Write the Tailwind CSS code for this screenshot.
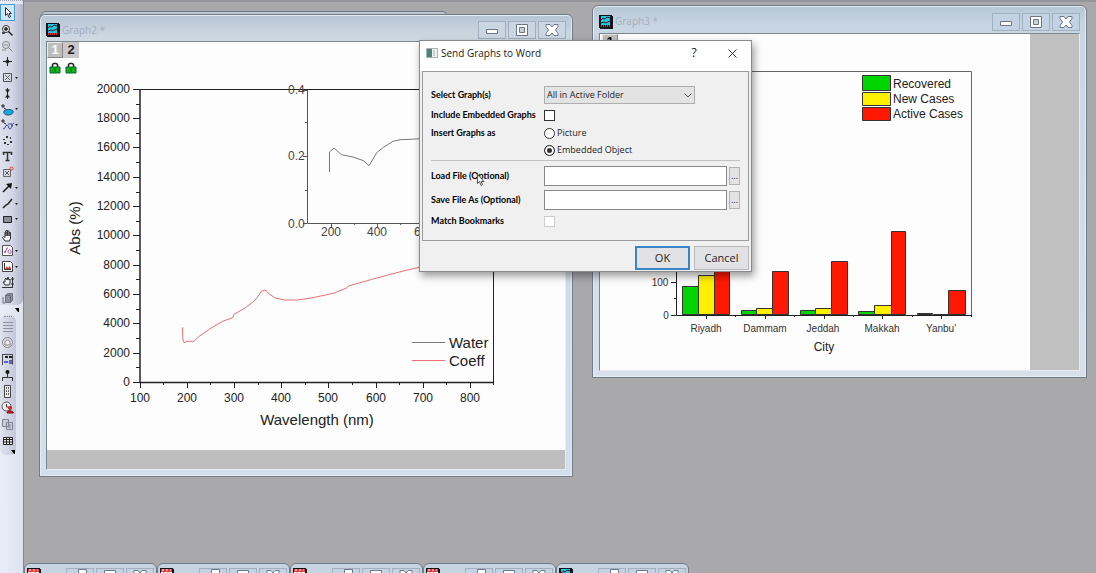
<!DOCTYPE html>
<html lang="en">
<head>
    <meta charset="UTF-8">
    <meta name="viewport" content="width=device-width, initial-scale=1.0">
    <title>Send Graphs to Word</title>
    <script src="https://cdn.jsdelivr.net/npm/@tailwindcss/browser@4"></script>
</head>
<body class="flex h-screen overflow-hidden bg-[#a9a8ab] font-['Open_Sans','Noto_Sans',sans-serif] text-black">

    <!-- Shared symbols -->
    <svg class="hidden">
        <symbol id="graph-icon" viewBox="0 0 14 14">
            <path d="M0 0h13v1h1v13H1v-1H0z" fill="#10131a"/>
            <path d="M2 1h9v9H2z" fill="#20c8e0"/>
            <path d="M2 5l2-2 2 1 2-2 3 1M2 8l3-1 2 1 4-2" stroke="#123" fill="none"/>
            <path d="M3 4h2M7 7h2" stroke="#d33"/>
            <path d="M2 11h1M4 11h1M6 11h1M8 11h1M10 11h1" stroke="#e22" stroke-width="2"/>
        </symbol>
        <symbol id="book-icon" viewBox="0 0 14 14">
            <path d="M0 0h13v1h1v13H0z" fill="#10131a"/>
            <path d="M1 1h11v3H1z" fill="#e33b3b"/>
            <path d="M2 2h2M6 2h2M10 2h1" stroke="#fff"/>
            <path d="M1 4h11v9H1z" fill="#fff"/>
            <path d="M4 4v9M8 4v9M1 7h11M1 10h11" stroke="#99a"/>
        </symbol>
        <symbol id="min" viewBox="0 0 14 14">
            <path d="M1.500 6.500h11v4h-11z" fill="#fff" stroke="#6b7688"/>
        </symbol>
        <symbol id="max" viewBox="0 0 14 14">
            <path d="M1.500 1.500h11v11h-11z" fill="#fff" stroke="#6b7688"/>
            <path d="M4.500 4.500h5v5h-5z" fill="#c3d0df" stroke="#6b7688"/>
        </symbol>
        <symbol id="restore" viewBox="0 0 14 14">
            <path d="M5.500 .5h8v7h-8z" fill="#fff" stroke="#6b7688"/>
            <path d="M1.500 4.500h8v8h-8z" fill="#fff" stroke="#6b7688"/>
            <path d="M4.500 7.500h2v2h-2z" fill="#c3d0df" stroke="#6b7688"/>
        </symbol>
        <symbol id="close" viewBox="0 0 14 14">
            <path d="M1 1.500h4L7 4l2-2.500h4v2L10.500 7l2.500 3.500v2H9L7 10l-2 2.500H1v-2L3.500 7 1 3.500z" fill="#fff" stroke="#6b7688"/>
        </symbol>
        <symbol id="lock" viewBox="0 0 12 12">
            <path d="M3.500 6V2.500L5 1.500h2l1.500 1V6" fill="none" stroke="#222" stroke-width="1.500"/>
            <path d="M1 5h10v6H1z" fill="#12b312" stroke="#063"/>
            <path d="M6 6v4" stroke="#062"/>
        </symbol>
    </svg>

    <!-- Tool bar -->
    <aside class="flex w-6 shrink-0 flex-col border-r border-[#85868f] bg-gradient-to-r from-[#e9edf8] to-[#dfe4f2]">
        <div class="h-1 border-t border-dotted border-[#9a9fb5]"></div>
        <div class="flex h-[301px] flex-col justify-between rounded-br-md bg-gradient-to-r from-[#dde1ee] via-[#d3d7e6] to-[#b4b8cc]">
            <button aria-label="Pointer" class="h-[17px] w-[15px] border border-[#4a9ad4] bg-[#cfe6f8]">
                <svg class="size-[13px]" viewBox="0 0 13 13"><path d="M4.500 1.500v8l2-2 1.500 4 1.500-1-1.500-3h2.500z" fill="#fff" stroke="#333"/></svg>
            </button>
            <button aria-label="Zoom in" class="h-[13px] pl-[1px]"><svg class="size-[13px]" viewBox="0 0 13 13"><circle cx="5" cy="5" r="3.500" fill="#eee" stroke="#333"/><path d="M3 5h4M5 3v4M7.500 7.500l4 4M1 9h3" stroke="#222" stroke-width="1.500"/></svg></button>
            <button aria-label="Zoom out" class="h-[13px] pl-[1px]"><svg class="size-[13px]" viewBox="0 0 13 13"><circle cx="5" cy="5" r="3.500" fill="none" stroke="#888"/><path d="M3 5h4M7.500 7.500l4 4M1 10h4" stroke="#888"/></svg></button>
            <button aria-label="Screen reader" class="h-[13px] pl-[1px]"><svg class="size-[13px]" viewBox="0 0 13 13"><path d="M6.500 2v9M2 6.500h9" stroke="#222"/><path d="M6.500 4l2.500 2.500L6.500 9 4 6.500z" fill="#222"/></svg></button>
            <button aria-label="Data selector" class="flex h-[13px] items-center pl-[1px]"><svg class="size-[13px]" viewBox="0 0 13 13"><path d="M2.500 2.500h8v8h-8z" fill="none" stroke="#555"/><path d="M4 4l5 5M9 4L4 9" stroke="#666"/></svg><svg class="ml-px h-[2px] w-[3px]" viewBox="0 0 4 3"><path d="M0 0h4L2 3z"/></svg></button>
            <button aria-label="Data cursor" class="h-[13px] pl-[1px]"><svg class="size-[13px]" viewBox="0 0 13 13"><path d="M4 2.500h5L6.500 6zM6.500 7L9 10.500H4zM6 1h1v11H6z" fill="#222"/></svg></button>
            <button aria-label="Mask points" class="flex h-[13px] items-center pl-[1px]"><svg class="size-[13px]" viewBox="0 0 13 13"><path d="M2 1v4M0 3h4M3 5l3 2" stroke="#222"/><path d="M3 8c2-2 8-2 9 0s-2 4-5 4-5-2-4-4z" fill="#1aa9dc" stroke="#15567a"/></svg><svg class="ml-px h-[2px] w-[3px]" viewBox="0 0 4 3"><path d="M0 0h4L2 3z"/></svg></button>
            <button aria-label="Draw data" class="flex h-[13px] items-center pl-[1px]"><svg class="size-[13px]" viewBox="0 0 13 13"><path d="M2 1v4M0 3h4M3 5l2 1" stroke="#222"/><path d="M2 11c3 0 2-4 4-4s1 4 3 4 1-5 4-6M7 6h4v3" fill="none" stroke="#3b4a8c"/></svg><svg class="ml-px h-[2px] w-[3px]" viewBox="0 0 4 3"><path d="M0 0h4L2 3z"/></svg></button>
            <button aria-label="Cluster" class="h-[13px] pl-[1px]"><svg class="size-[13px]" viewBox="0 0 13 13"><path d="M5 2h2v2H5zM9 3h1v2H9zM2 5h2v1H2zM3 8h2v2H3zM9 7h2v2H9zM6 10h2v1H6z" fill="#333"/></svg></button>
            <button aria-label="Text" class="h-[13px] pl-[1px]"><svg class="size-[13px]" viewBox="0 0 13 13"><path d="M2.500 5V2.500h8V5M6.500 2.500v8M4.500 10.500h4" stroke="#333" stroke-width="1.500" fill="none"/></svg></button>
            <button aria-label="Annotation" class="h-[13px] pl-[1px]"><svg class="size-[13px]" viewBox="0 0 13 13"><path d="M2.500 3.500h7v7h-7z" fill="none" stroke="#666"/><path d="M4 5l4 4M8 5L4 9" stroke="#555"/><circle cx="10.500" cy="2.500" r="1.500" fill="none" stroke="#e33"/></svg></button>
            <button aria-label="Arrow" class="flex h-[13px] items-center pl-[1px]"><svg class="size-[13px]" viewBox="0 0 13 13"><path d="M2 11l6-6" stroke="#111" stroke-width="1.500"/><path d="M5 3l6-1-1 6z" fill="#111"/></svg><svg class="ml-px h-[2px] w-[3px]" viewBox="0 0 4 3"><path d="M0 0h4L2 3z"/></svg></button>
            <button aria-label="Line" class="flex h-[13px] items-center pl-[1px]"><svg class="size-[13px]" viewBox="0 0 13 13"><path d="M2 11l3-3 2-1 4-5" stroke="#222" stroke-width="1.500" fill="none"/></svg><svg class="ml-px h-[2px] w-[3px]" viewBox="0 0 4 3"><path d="M0 0h4L2 3z"/></svg></button>
            <button aria-label="Rectangle" class="flex h-[13px] items-center pl-[1px]"><svg class="size-[13px]" viewBox="0 0 13 13"><path d="M2.500 3.500h8v6h-8z" fill="#8d8f98" stroke="#222"/></svg><svg class="ml-px h-[2px] w-[3px]" viewBox="0 0 4 3"><path d="M0 0h4L2 3z"/></svg></button>
            <button aria-label="Pan" class="h-[13px] pl-[1px]"><svg class="size-[13px]" viewBox="0 0 13 13"><path d="M4 12L1.500 8.500l1-1L4 8.500V3h1v4V1.500h1.500V6.500V2H8v5V3.500h1.500V9L8.500 12z" fill="#fff" stroke="#333"/></svg></button>
            <button aria-label="Insert equation" class="flex h-[13px] items-center pl-[1px]"><svg class="size-[13px]" viewBox="0 0 13 13"><path d="M1.500 1.500h8l2 2v8h-10z" fill="#fff" stroke="#555"/><path d="M3 7l1 2 2-5h1M7 8c0-3 3-3 3 0s-3 1-3 0" fill="none" stroke="#a34b8f"/></svg><svg class="ml-px h-[2px] w-[3px]" viewBox="0 0 4 3"><path d="M0 0h4L2 3z"/></svg></button>
            <button aria-label="Insert graph" class="flex h-[13px] items-center pl-[1px]"><svg class="size-[13px]" viewBox="0 0 13 13"><path d="M1.500 1.500h8l2 2v8h-10z" fill="#fff" stroke="#444"/><path d="M3.500 3v6.500H10" fill="none" stroke="#333"/><path d="M4 9l2-3 1 2 2-2 1 3z" fill="#d33"/></svg><svg class="ml-px h-[2px] w-[3px]" viewBox="0 0 4 3"><path d="M0 0h4L2 3z"/></svg></button>
            <button aria-label="Rescale pan" class="h-[13px] pl-[1px]"><svg class="size-[13px]" viewBox="0 0 13 13"><path d="M4 9L2 6l2 0V3l1-1 1 2 1-3 1 3 1-1v4l-1 2z" fill="#eee" stroke="#333"/><path d="M11.500 1v11M1 11.500h11M10 3h3M10 8h3" stroke="#333"/></svg></button>
            <button aria-label="3D rotate" class="h-[13px] pl-[1px]"><svg class="size-[13px]" viewBox="0 0 13 13"><path d="M4.500 3.500l2-2h5v7l-2 2h-5z" fill="#8b93a0" stroke="#6c7480"/><path d="M4.500 3.500h5v7M2 5v6h2" fill="none" stroke="#626a76"/></svg></button>
        </div>
        <div class="flex h-[10px] items-center justify-end pr-1"><svg class="size-1" viewBox="0 0 4 4"><path d="M0 0h4v4H3z"/></svg></div>
        <div class="flex h-[140px] w-4 flex-col justify-between rounded-md bg-gradient-to-r from-[#dfe3ef] to-[#c3c7d8] py-px">
            <div class="ml-1 w-2 border-t border-dotted border-[#8c90a4]"></div>
            <button aria-label="Rows" class="h-[13px] pl-[1px]"><svg class="size-[13px]" viewBox="0 0 13 13"><path d="M2 2.500h10M2 5.500h10M2 8.500h10M2 11.500h10" stroke="#8d91a0"/></svg></button>
            <button aria-label="Refresh" class="h-[13px] pl-[1px]"><svg class="size-[13px]" viewBox="0 0 13 13"><circle cx="6.500" cy="6.500" r="5" fill="#dde" stroke="#888"/><path d="M4 9V6.500a2.500 2.500 0 015 0V9z" fill="#eee" stroke="#888"/></svg></button>
            <button aria-label="Legend" class="h-[13px] pl-[1px]"><svg class="size-[13px]" viewBox="0 0 13 13"><path d="M1.500 1.500h10v10" fill="none" stroke="#444"/><path d="M1.500 1v11" stroke="#444"/><path d="M4 4h3M8 4h3" stroke="#222" stroke-width="2"/><path d="M3 9h4M8 8h3M8 10h3" stroke="#2b3be0" stroke-width="1.500"/></svg></button>
            <button aria-label="Scale" class="h-[13px] pl-[1px]"><svg class="size-[13px]" viewBox="0 0 13 13"><circle cx="6.500" cy="3" r="2" fill="#111"/><path d="M1.500 12V8.500h10V12M6.500 5v3" fill="none" stroke="#333"/></svg></button>
            <button aria-label="Ruler" class="h-[13px] pl-[1px]"><svg class="size-[13px]" viewBox="0 0 13 13"><path d="M3.500 .5h6v12h-6z" fill="#eee" stroke="#444"/><path d="M5 3h3M5 6h3M5 9h3" stroke="#333" stroke-width="1.500" stroke-dasharray="1 1"/></svg></button>
            <button aria-label="Date stamp" class="h-[13px] pl-[1px]"><svg class="size-[13px]" viewBox="0 0 13 13"><circle cx="5.500" cy="5.500" r="4.500" fill="#eee" stroke="#555"/><path d="M5.500 3v3h2" stroke="#333" fill="none"/><circle cx="9" cy="7" r="2" fill="#d42020"/><path d="M6 12c0-3 6-3 6.500 0z" fill="#d42020" stroke="#811"/></svg></button>
            <button aria-label="Copy" class="h-[13px] pl-[1px]"><svg class="size-[13px]" viewBox="0 0 13 13"><path d="M1.500 1.500h6v7h-6zM5.500 4.500h6v7h-6z" fill="#c9ccd8" stroke="#7f8494"/><path d="M7 7h3M7 9h3" stroke="#7f8494"/></svg></button>
            <button aria-label="Table" class="h-[13px] pl-[1px]"><svg class="size-[13px]" viewBox="0 0 13 13"><path d="M2.500 3.500h9v7h-9zM2.500 5.500h9M2.500 8h9M5.500 3.500v7M8.500 3.500v7" fill="#eee" stroke="#222"/></svg></button>
            <div class="flex justify-end pr-px"><svg class="size-1" viewBox="0 0 4 4"><path d="M0 0h4v4H3z"/></svg></div>
        </div>
    </aside>

    <!-- Workspace -->
    <main class="relative flex-1 overflow-hidden border-t-2 border-[#96959c]">

        <div class="absolute top-[9px] left-4 h-6 w-[408px] rounded-t-md border border-[#717a84] bg-[#bcc6d1]"></div>

        <!-- Graph2 -->
        <section class="absolute top-3 left-[15px] flex h-[463px] w-[534px] flex-col rounded-t-md border border-[#727c88] bg-gradient-to-b from-[#b7c6d4] via-[#cdd8e2] via-5% to-[#d3dfec] px-[6px] pb-[6px] shadow-[inset_0_0_0_1px_#e3ebf3]">
            <header class="flex h-[26px] items-center">
                <svg class="mt-1 size-[14px]"><use href="#graph-icon"/></svg>
                <h2 class="mt-1 ml-[2px] flex-1 text-[10px] text-[#a3aebb]">Graph2 *</h2>
                <div class="mt-1 flex gap-[2px]">
                    <button aria-label="Minimize" class="grid h-[18px] w-7 place-items-center border border-[#a1afbf] bg-[#cad6e2]"><svg class="size-[14px]"><use href="#min"/></svg></button>
                    <button aria-label="Maximize" class="grid h-[18px] w-7 place-items-center border border-[#a1afbf] bg-[#cad6e2]"><svg class="size-[14px]"><use href="#max"/></svg></button>
                    <button aria-label="Close" class="grid h-[18px] w-7 place-items-center border border-[#a1afbf] bg-[#cad6e2]"><svg class="size-[14px]"><use href="#close"/></svg></button>
                </div>
            </header>
            <div class="relative flex-1 border border-[#7b868e] border-r-[#e6ecf3] border-b-[#e6ecf3] bg-[#bebebe]">
                <svg class="block w-full bg-[#fdfdfe] font-['Liberation_Sans',sans-serif]" viewBox="47 42 518 408">
                    <g stroke="#222" fill="none">
                        <path d="M140 89.500H493.500V382" />
                        <path d="M140 89V382.500H494" stroke-width="1.500"/>
                        <path d="M133 89.500h7M133 118.500h7M133 147.500h7M133 177.500h7M133 206.500h7M133 235.500h7M133 265.500h7M133 294.500h7M133 323.500h7M133 353.500h7M133 382.500h7"/>
                        <path d="M136 104.500h4M136 133.500h4M136 162.500h4M136 192.500h4M136 221.500h4M136 250.500h4M136 279.500h4M136 309.500h4M136 338.500h4M136 367.500h4"/>
                        <path d="M140.500 382v6M187.500 382v6M234.500 382v6M281.500 382v6M328.500 382v6M376.500 382v6M423.500 382v6M470.500 382v6"/>
                        <path d="M163.500 382v3M210.500 382v3M258.500 382v3M305.500 382v3M352.500 382v3M399.500 382v3M446.500 382v3M493.500 382v3"/>
                    </g>
                    <g class="text-[12px]" fill="#222" text-anchor="end">
                        <text x="130" y="93">20000</text>
                        <text x="130" y="122">18000</text>
                        <text x="130" y="151">16000</text>
                        <text x="130" y="181">14000</text>
                        <text x="130" y="210">12000</text>
                        <text x="130" y="239">10000</text>
                        <text x="130" y="269">8000</text>
                        <text x="130" y="298">6000</text>
                        <text x="130" y="327">4000</text>
                        <text x="130" y="357">2000</text>
                        <text x="130" y="386">0</text>
                    </g>
                    <g class="text-[12px]" fill="#222" text-anchor="middle">
                        <text x="140" y="402">100</text>
                        <text x="187" y="402">200</text>
                        <text x="234" y="402">300</text>
                        <text x="281" y="402">400</text>
                        <text x="328" y="402">500</text>
                        <text x="376" y="402">600</text>
                        <text x="423" y="402">700</text>
                        <text x="470" y="402">800</text>
                    </g>
                    <text class="text-[15px]" x="317" y="425" text-anchor="middle" fill="#222">Wavelength (nm)</text>
                    <text class="text-[15px]" transform="translate(80 228) rotate(-90)" text-anchor="middle" fill="#222">Abs (%)</text>
                    <path d="M182.300 327.300l.7 12.700 1 2.700 3.300-1.400h6.700l4.300-4.300L210 328.700l13.300-7.700 9.400-3.300 1.300-3.400 11-6.300 10-7.700 6.700-9.300 4-1 2.600 3.300 6.700 4.700 10 2h11.700l13.300-1.700 23.300-5 13.400-5.300 1.600-2 28.400-8 26.600-7 16-3.700 15-4" fill="none" stroke="#ee7070"/>
                    <!-- Inset plot -->
                    <path d="M307.500 90V223.500H440M303 90.500h4M303 156.500h4M303 223.500h4M305 122.500h2M305 190.500h2M331.500 223v4M377.500 223v4M423.500 223v4M354.500 223v2M400.500 223v2" stroke="#555" fill="none"/>
                    <path d="M329.500 172v-20l4.500-4 7.500 6.700 11.500 2.300 10 3.500 6 5.200 7.700-13 6.800-5.400 9.500-6 7-1.600 10-.4 16-1" fill="none" stroke="#777"/>
                    <g class="text-[12px]" fill="#444">
                        <text x="288" y="94">0.4</text>
                        <text x="288" y="160">0.2</text>
                        <text x="288" y="228">0.0</text>
                        <text x="331" y="236" text-anchor="middle">200</text>
                        <text x="377" y="236" text-anchor="middle">400</text>
                        <text x="424" y="236" text-anchor="middle">600</text>
                    </g>
                    <path d="M412 342.500h33" stroke="#777"/>
                    <path d="M412 360.500h33" stroke="#ee7070"/>
                    <text class="text-[15px]" x="449" y="348" fill="#222">Water</text>
                    <text class="text-[15px]" x="449" y="366" fill="#222">Coeff</text>
                </svg>
                <!-- Layer tabs -->
                <div class="absolute top-0 left-0 grid grid-cols-2 justify-items-center font-['Liberation_Sans',sans-serif] text-[13px] leading-4 font-bold">
                    <button class="h-4 w-4 border border-t-[#e8e8e8] border-r-[#888] border-b-[#888] border-l-[#e8e8e8] bg-[#bdbdbd] leading-[14px] text-white">1</button>
                    <button class="h-4 w-4 bg-[#c9c7cb] text-[#222]">2</button>
                    <svg class="mt-1 size-3"><use href="#lock"/></svg>
                    <svg class="mt-1 size-3"><use href="#lock"/></svg>
                </div>
            </div>
        </section>

        <!-- Graph3 -->
        <section class="absolute top-[3px] left-[568px] flex h-[373px] w-[495px] flex-col rounded-t-md border border-[#727c88] bg-gradient-to-b from-[#b7c6d4] via-[#c8d6e4] via-5% to-[#d8e1ea] px-[6px] pb-[6px] shadow-[inset_0_0_0_1px_#e3ebf3]">
            <header class="flex h-[27px] items-center">
                <svg class="mt-1 size-[14px]"><use href="#graph-icon"/></svg>
                <h2 class="mt-1 ml-[2px] flex-1 text-[10px] text-[#a3aebb]">Graph3 *</h2>
                <div class="mt-1 flex gap-[2px]">
                    <button aria-label="Minimize" class="grid h-[18px] w-7 place-items-center border border-[#a1afbf] bg-[#c4d3e3]"><svg class="size-[14px]"><use href="#min"/></svg></button>
                    <button aria-label="Maximize" class="grid h-[18px] w-7 place-items-center border border-[#a1afbf] bg-[#c4d3e3]"><svg class="size-[14px]"><use href="#max"/></svg></button>
                    <button aria-label="Close" class="grid h-[18px] w-7 place-items-center border border-[#a1afbf] bg-[#c4d3e3]"><svg class="size-[14px]"><use href="#close"/></svg></button>
                </div>
            </header>
            <div class="relative flex-1 border border-[#7b868e] border-r-[#e6ecf3] border-b-[#e6ecf3] bg-[#c0c0c0] pr-[49px]">
                <svg class="block w-full bg-[#fdfdfe] font-['Liberation_Sans',sans-serif]" viewBox="600 34 430 336">
                    <path d="M676.500 71.500H971.500V315" fill="none" stroke="#666"/>
                    <path d="M676.500 71V315.500H972M671 282.500h5M671 315.500h5M674 298.500h2M706.500 315v4M765.500 315v4M824.500 315v4M882.500 315v4M941.500 315v4M735.500 315v2M794.500 315v2M853.500 315v2M912.500 315v2M971.500 315v2" fill="none" stroke="#222"/>
                    <g stroke="#333">
                        <g fill="#00d500">
                            <path d="M682.500 286.500h16v28h-16zM741.500 310.500h15v4h-15zM800.500 310.500h15v4h-15zM858.500 311.500h16v3h-16zM917.500 313.500h15v1h-15z"/>
                        </g>
                        <g fill="#fff000">
                            <path d="M698.500 275.500h16v39h-16zM756.500 308.500h16v6h-16zM815.500 308.500h16v6h-16zM874.500 305.500h17v9h-17zM933.500 314.500h15v0h-15z"/>
                        </g>
                        <g fill="#ff1800">
                            <path d="M714.500 200.500h15v114h-15zM772.500 271.500h16v43h-16zM831.500 261.500h16v53h-16zM891.500 231.500h14v83h-14zM948.500 290.500h17v24h-17z"/>
                        </g>
                        <path d="M862.500 75.500h28v15h-28z" fill="#00d500"/>
                        <path d="M862.500 92.500h28v13h-28z" fill="#fff000"/>
                        <path d="M862.500 107.500h28v13h-28z" fill="#ff1800"/>
                    </g>
                    <g class="text-[12px]" fill="#222">
                        <text x="893" y="88">Recovered</text>
                        <text x="893" y="103">New Cases</text>
                        <text x="893" y="118">Active Cases</text>
                        <text x="824" y="351" text-anchor="middle">City</text>
                    </g>
                    <g class="text-[10px]" fill="#333" text-anchor="middle">
                        <text x="660" y="286">100</text>
                        <text x="666" y="319">0</text>
                        <text x="706" y="332">Riyadh</text>
                        <text x="765" y="332">Dammam</text>
                        <text x="823" y="332">Jeddah</text>
                        <text x="882" y="332">Makkah</text>
                        <text x="941" y="332">Yanbu'</text>
                    </g>
                </svg>
                <button class="absolute top-0 left-[2px] h-4 w-4 border border-t-[#e8e8e8] border-r-[#888] border-b-[#888] border-l-[#e8e8e8] bg-[#bdbdbd] font-['Liberation_Sans',sans-serif] text-[13px] leading-[14px] font-bold">1</button>
            </div>
        </section>

        <!-- Minimized windows -->
        <div class="absolute -bottom-[18px] left-0 flex">
            <div class="flex h-7 w-[133px] gap-[2px] rounded-t-md border border-[#727c88] bg-[#c6d3e0] px-[2px] pt-1">
                <svg class="mr-auto size-[14px]"><use href="#book-icon"/></svg>
                <button aria-label="Restore" class="grid w-7 justify-center border border-[#a1afbf] bg-[#c4d3e3]"><svg class="size-[14px]"><use href="#restore"/></svg></button>
                <button aria-label="Maximize" class="grid w-7 justify-center border border-[#a1afbf] bg-[#c4d3e3]"><svg class="size-[14px]"><use href="#max"/></svg></button>
                <button aria-label="Close" class="grid w-7 justify-center border border-[#a1afbf] bg-[#c4d3e3]"><svg class="size-[14px]"><use href="#close"/></svg></button>
            </div>
            <div class="flex h-7 w-[133px] gap-[2px] rounded-t-md border border-[#727c88] bg-[#c6d3e0] px-[2px] pt-1">
                <svg class="mr-auto size-[14px]"><use href="#book-icon"/></svg>
                <button aria-label="Restore" class="grid w-7 justify-center border border-[#a1afbf] bg-[#c4d3e3]"><svg class="size-[14px]"><use href="#restore"/></svg></button>
                <button aria-label="Maximize" class="grid w-7 justify-center border border-[#a1afbf] bg-[#c4d3e3]"><svg class="size-[14px]"><use href="#max"/></svg></button>
                <button aria-label="Close" class="grid w-7 justify-center border border-[#a1afbf] bg-[#c4d3e3]"><svg class="size-[14px]"><use href="#close"/></svg></button>
            </div>
            <div class="flex h-7 w-[133px] gap-[2px] rounded-t-md border border-[#727c88] bg-[#c6d3e0] px-[2px] pt-1">
                <svg class="mr-auto size-[14px]"><use href="#book-icon"/></svg>
                <button aria-label="Restore" class="grid w-7 justify-center border border-[#a1afbf] bg-[#c4d3e3]"><svg class="size-[14px]"><use href="#restore"/></svg></button>
                <button aria-label="Maximize" class="grid w-7 justify-center border border-[#a1afbf] bg-[#c4d3e3]"><svg class="size-[14px]"><use href="#max"/></svg></button>
                <button aria-label="Close" class="grid w-7 justify-center border border-[#a1afbf] bg-[#c4d3e3]"><svg class="size-[14px]"><use href="#close"/></svg></button>
            </div>
            <div class="flex h-7 w-[133px] gap-[2px] rounded-t-md border border-[#727c88] bg-[#c6d3e0] px-[2px] pt-1">
                <svg class="mr-auto size-[14px]"><use href="#book-icon"/></svg>
                <button aria-label="Restore" class="grid w-7 justify-center border border-[#a1afbf] bg-[#c4d3e3]"><svg class="size-[14px]"><use href="#restore"/></svg></button>
                <button aria-label="Maximize" class="grid w-7 justify-center border border-[#a1afbf] bg-[#c4d3e3]"><svg class="size-[14px]"><use href="#max"/></svg></button>
                <button aria-label="Close" class="grid w-7 justify-center border border-[#a1afbf] bg-[#c4d3e3]"><svg class="size-[14px]"><use href="#close"/></svg></button>
            </div>
            <div class="flex h-7 w-[133px] gap-[2px] rounded-t-md border border-[#727c88] bg-[#c6d3e0] px-[2px] pt-1">
                <svg class="mr-auto size-[14px]"><use href="#graph-icon"/></svg>
                <button aria-label="Restore" class="grid w-7 justify-center border border-[#a1afbf] bg-[#c4d3e3]"><svg class="size-[14px]"><use href="#restore"/></svg></button>
                <button aria-label="Maximize" class="grid w-7 justify-center border border-[#a1afbf] bg-[#c4d3e3]"><svg class="size-[14px]"><use href="#max"/></svg></button>
                <button aria-label="Close" class="grid w-7 justify-center border border-[#a1afbf] bg-[#c4d3e3]"><svg class="size-[14px]"><use href="#close"/></svg></button>
            </div>
        </div>

        <!-- Dialog -->
        <form role="dialog" aria-labelledby="dialog-title" class="absolute top-[38px] left-[395px] w-[333px] border border-[#8a8a8c] bg-[#f0f0f1] text-[9px] text-[#222] shadow-[2px_4px_8px_rgba(0,0,0,0.4)]">
            <header class="flex h-[30px] items-center bg-white pb-[6px] pl-[6px]">
                <svg class="h-[10px] w-3" viewBox="0 0 12 10"><path d="M.5 .5h11v9H.5z" fill="#eef2f1" stroke="#a8b4b2"/><path d="M1 1h5v8H1z" fill="#4f8578"/><path d="M8 2v6" stroke="#9fb4b0"/></svg>
                <h1 id="dialog-title" class="ml-[3px] flex-1 text-[10px]">Send Graphs to Word</h1>
                <button type="button" aria-label="Help" class="w-[38px] text-[12px]">?</button>
                <button type="button" aria-label="Close" class="grid h-6 w-[38px] place-items-center"><svg class="size-[9px]" viewBox="0 0 9 9"><path d="M.5 .5l8 8M8.500 .5l-8 8" stroke="#333"/></svg></button>
            </header>
            <div class="mx-[2px] border border-[#9b9b9d] px-2 pt-3 pb-[10px]">
                <div class="grid grid-cols-[113px_1fr] grid-rows-[22px_18px_18px_16px] items-center">
                    <label for="graphs" class="font-['Lato','Open_Sans',sans-serif] font-bold text-black">Select Graph(s)</label>
                    <div class="relative w-[151px]">
                        <select id="graphs" class="block h-[18px] w-full appearance-none border border-[#adadad] bg-[#e3e3e4] px-[2px] text-[9px] leading-4">
                            <option>All in Active Folder</option>
                        </select>
                        <svg class="pointer-events-none absolute top-[7px] right-[3px] h-[5px] w-2" viewBox="0 0 8 5"><path d="M.5 .5L4 4 7.500 .5" fill="none" stroke="#555"/></svg>
                    </div>
                    <label for="embedded" class="font-['Lato','Open_Sans',sans-serif] font-bold whitespace-nowrap text-black">Include Embedded Graphs</label>
                    <input id="embedded" type="checkbox" class="size-[11px] appearance-none border border-[#333] bg-white">
                    <span class="font-['Lato','Open_Sans',sans-serif] font-bold text-black">Insert Graphs as</span>
                    <label class="flex items-center gap-[2px]"><input type="radio" name="mode" class="size-[11px] appearance-none rounded-full border border-[#333] bg-white checked:border-[#333] checked:bg-[#333] checked:shadow-[inset_0_0_0_2px_#fff]">Picture</label>
                    <span></span>
                    <label class="flex items-center gap-[2px]"><input type="radio" name="mode" checked class="size-[11px] appearance-none rounded-full border border-[#333] bg-white checked:border-[#333] checked:bg-[#333] checked:shadow-[inset_0_0_0_2px_#fff]">Embedded Object</label>
                </div>
                <hr class="mt-[2px] mb-[3px] border-[#c2c2c4]">
                <div class="grid grid-cols-[113px_1fr_11px] grid-rows-[24px_24px_18px] items-center">
                    <label for="load" class="font-['Lato','Open_Sans',sans-serif] font-bold text-black">Load File (Optional)</label>
                    <input id="load" type="text" class="h-5 w-[183px] border border-[#8a8a8c] bg-white px-1">
                    <button type="button" aria-label="Browse load file" class="h-[18px] border border-[#b2b2b4] bg-[#e3e3e4] leading-3">...</button>
                    <label for="save" class="font-['Lato','Open_Sans',sans-serif] font-bold text-black">Save File As (Optional)</label>
                    <input id="save" type="text" class="h-5 w-[183px] border border-[#8a8a8c] bg-white px-1">
                    <button type="button" aria-label="Browse save file" class="h-[18px] border border-[#b2b2b4] bg-[#e3e3e4] leading-3">...</button>
                    <label for="bookmarks" class="font-['Lato','Open_Sans',sans-serif] font-bold text-black">Match Bookmarks</label>
                    <input id="bookmarks" type="checkbox" disabled class="size-[11px] appearance-none border border-[#ccc] bg-white">
                </div>
            </div>
            <footer class="flex justify-end gap-1 px-[2px] pt-[5px] pb-px text-[11px]">
                <button type="submit" class="h-6 w-[55px] border-2 border-[#3a84c8] bg-[#e2e2e4] leading-5">OK</button>
                <button type="button" class="h-6 w-[55px] border border-[#b8b8ba] bg-[#e2e2e4] leading-5">Cancel</button>
            </footer>
        </form>

        <!-- Mouse pointer -->
        <svg class="absolute top-[172px] left-[453px] h-3 w-2" viewBox="0 0 8 12"><path d="M.5 .5v9l2-2 1.500 4 1.500-1-1.500-3h3z" fill="#fff" stroke="#555"/></svg>
    </main>
</body>
</html>
